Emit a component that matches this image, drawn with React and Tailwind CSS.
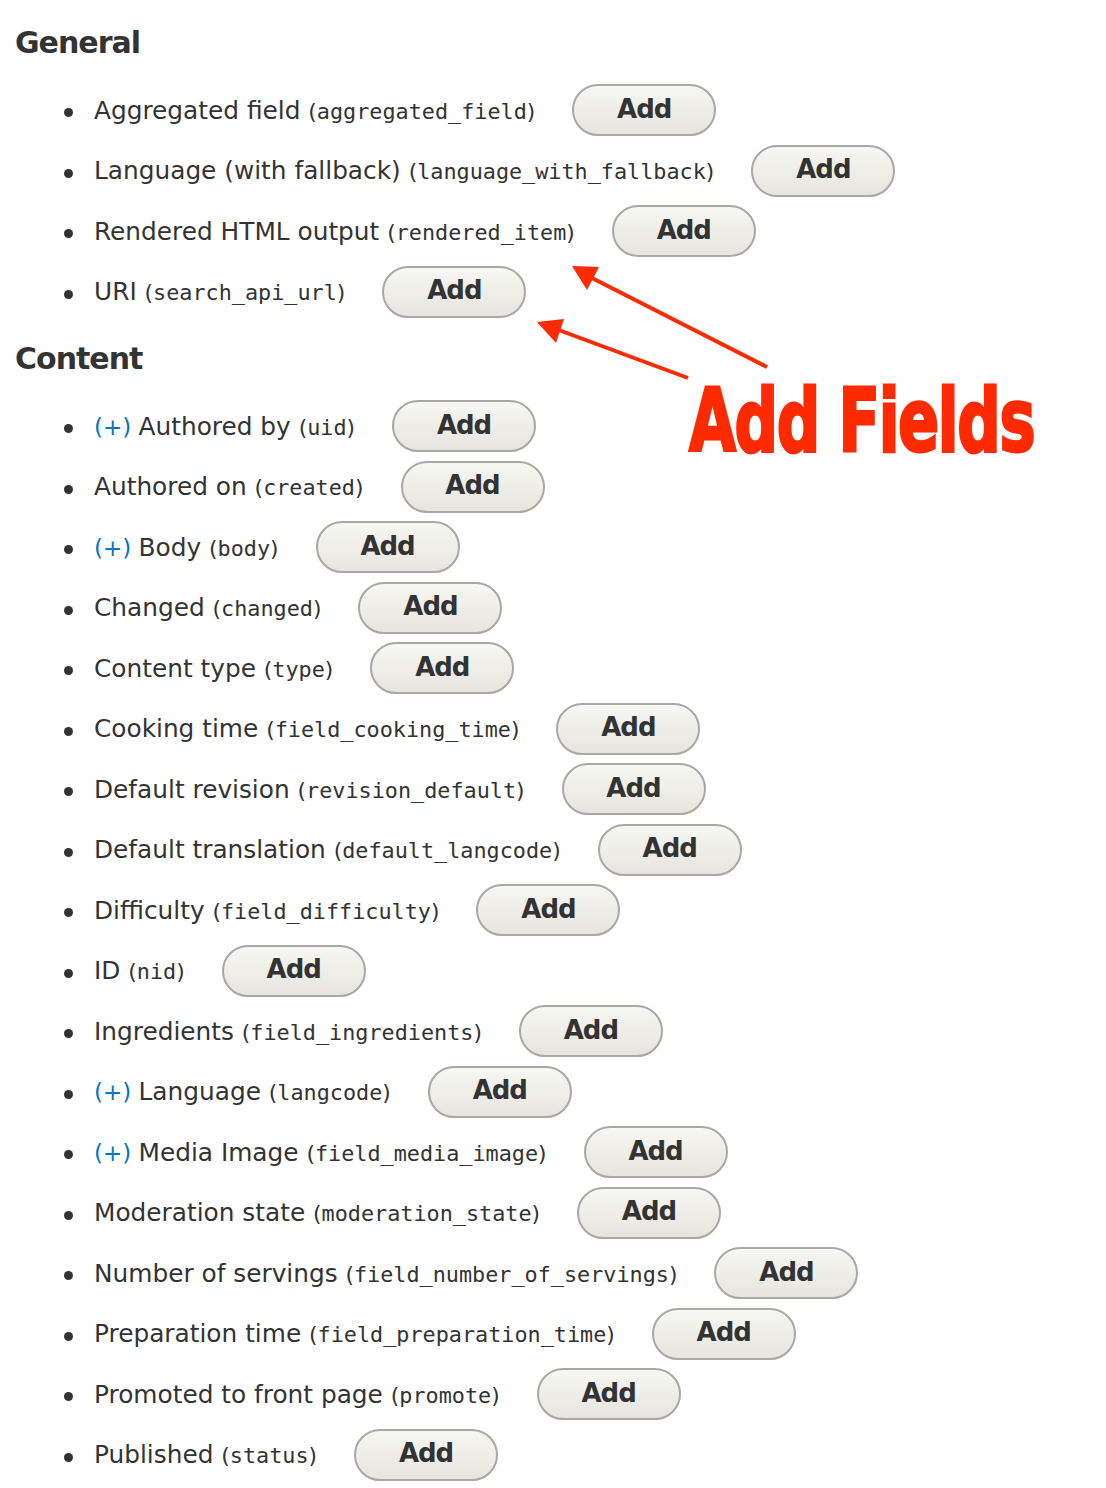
import React from 'react';

const general = [
  { label: 'Aggregated field', name: 'aggregated_field' },
  { label: 'Language (with fallback)', name: 'language_with_fallback' },
  { label: 'Rendered HTML output', name: 'rendered_item' },
  { label: 'URI', name: 'search_api_url' },
];

const content = [
  { label: 'Authored by', name: 'uid', more: true },
  { label: 'Authored on', name: 'created' },
  { label: 'Body', name: 'body', more: true },
  { label: 'Changed', name: 'changed' },
  { label: 'Content type', name: 'type' },
  { label: 'Cooking time', name: 'field_cooking_time' },
  { label: 'Default revision', name: 'revision_default' },
  { label: 'Default translation', name: 'default_langcode' },
  { label: 'Difficulty', name: 'field_difficulty' },
  { label: 'ID', name: 'nid' },
  { label: 'Ingredients', name: 'field_ingredients' },
  { label: 'Language', name: 'langcode', more: true },
  { label: 'Media Image', name: 'field_media_image', more: true },
  { label: 'Moderation state', name: 'moderation_state' },
  { label: 'Number of servings', name: 'field_number_of_servings' },
  { label: 'Preparation time', name: 'field_preparation_time' },
  { label: 'Promoted to front page', name: 'promote' },
  { label: 'Published', name: 'status' },
  { label: 'Revision create time', name: 'revision_timestamp' },
];

function FieldRow({ field }) {
  return (
    <li className="flex items-center h-[60.5px]">
      <span className="w-[9px] h-[9px] rounded-full bg-[#333] mt-[5px] mr-[21px] shrink-0" />
      <span className="whitespace-nowrap text-[24.8px] text-[#333]">
        {field.more && <a className="text-[#0074bd] text-[23px]">(+) </a>}
        {field.label}{' '}
        <span className="text-[21.8px]">
          (<code className="font-['DejaVu_Sans_Mono',monospace]">{field.name}</code>)
        </span>
      </span>
      <button className="ml-[37px] shrink-0 w-[144px] h-[52px] rounded-full border-2 border-[#a8a8a6] bg-linear-to-b from-[#f7f7f3] to-[#e6e5de] text-[26px] font-bold tracking-[-1px] text-[#333] pb-[2px]">
        Add
      </button>
    </li>
  );
}

function Section({ title, fields }) {
  return (
    <div>
      <h2 className="mt-[19px] mb-[19px] text-[30px] leading-[36px] font-bold tracking-[-1px] text-[#333]">
        {title}
      </h2>
      <ul className="pl-[49px]">
        {fields.map((f) => (
          <FieldRow key={f.name} field={f} />
        ))}
      </ul>
    </div>
  );
}

export default function App() {
  return (
    <div className="relative h-[1488px] overflow-hidden bg-white font-['DejaVu_Sans',sans-serif]">
      <div className="px-[15px] pt-[6px]">
        <Section title="General" fields={general} />
        <Section title="Content" fields={content} />
      </div>

      {/* annotation */}
      <svg className="absolute left-0 top-0 pointer-events-none" width="1106" height="1488">
        <line x1="767" y1="367" x2="590" y2="277" stroke="#ff2a00" strokeWidth="4" />
        <polygon points="572,266 599,267 587,290" fill="#ff2a00" />
        <line x1="688" y1="378" x2="556" y2="329" stroke="#ff2a00" strokeWidth="4" />
        <polygon points="537,322 564,319 556,343" fill="#ff2a00" />
      </svg>
      <div className="absolute left-[689px] top-[366px] w-[350px] h-[110px] pointer-events-none">
        <span className="block origin-left scale-x-[0.69] whitespace-nowrap text-[88px] leading-[110px] font-bold tracking-[-2px] text-[#ff2a00] [-webkit-text-stroke:3px_#ff2a00]">
          Add Fields
        </span>
      </div>
    </div>
  );
}
